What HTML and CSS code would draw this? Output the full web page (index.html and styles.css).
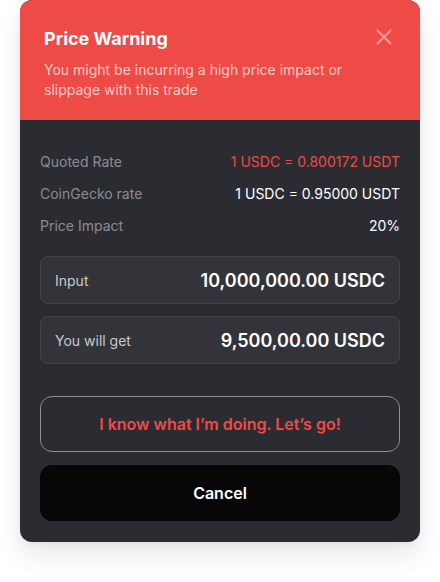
FILE: index.html
```html
<!DOCTYPE html>
<html>
<head>
<meta charset="utf-8">
<link rel="stylesheet" href="styles.css">
</head>
<body>
<div class="modal">
  <div class="header">
    <div class="title-row">
      <h1 class="title">Price Warning</h1>
      <button class="close" aria-label="Close">
        <svg width="16" height="16" viewBox="0 0 16 16"><path d="M1.5 1.5L14.5 14.5M14.5 1.5L1.5 14.5" stroke="currentColor" stroke-width="1.8" stroke-linecap="round"/></svg>
      </button>
    </div>
    <p class="subtitle">You might be incurring a high price impact or slippage with this trade</p>
  </div>
  <div class="body">
    <div class="rates">
      <div class="rate"><span class="label">Quoted Rate</span><span class="value red">1 USDC = 0.800172 USDT</span></div>
      <div class="rate"><span class="label">CoinGecko rate</span><span class="value">1 USDC = 0.95000 USDT</span></div>
      <div class="rate"><span class="label">Price Impact</span><span class="value">20%</span></div>
    </div>
    <div class="boxes">
      <div class="box"><span class="box-label">Input</span><span class="box-value">10,000,000.00 USDC</span></div>
      <div class="box"><span class="box-label">You will get</span><span class="box-value">9,500,00.00 USDC</span></div>
    </div>
    <div class="actions">
      <button class="btn btn-outline">I know what I’m doing. Let’s go!</button>
      <button class="btn btn-dark">Cancel</button>
    </div>
  </div>
</div>
</body>
</html>
```
FILE: styles.css
```css
* { box-sizing: border-box; }
html, body { background: #ffffff; }
body {
  margin: 0;
  min-height: 582px;
  font-family: Inter, "Noto Sans", sans-serif;
  padding: 0 20px 40px 20px;
}
.modal {
  width: 400px;
  border-radius: 12px;
  overflow: hidden;
  background: #2b2c31;
  box-shadow: 0 14px 28px rgba(0,0,0,0.09), 0 2px 8px rgba(0,0,0,0.05);
}
.header {
  background: #ef4b46;
  height: 120px;
  padding: 28px 24px 0 24px;
}
.title-row {
  display: flex;
  justify-content: space-between;
  align-items: flex-start;
}
.title {
  margin: 0;
  font-size: 18px;
  line-height: 22px;
  font-weight: 700;
  color: #ffffff;
}
.close {
  background: none;
  border: none;
  padding: 0;
  margin-top: 1px;
  margin-right: 4px;
  width: 16px;
  height: 16px;
  color: rgba(255,255,255,0.45);
  display: flex;
}
.subtitle {
  margin: 10px 0 0 0;
  font-size: 14px;
  line-height: 20px;
  color: rgba(255,255,255,0.72);
}
.body {
  padding: 32px 20px 21px 20px;
}
.rates {
  display: flex;
  flex-direction: column;
  gap: 12px;
}
.rate {
  display: flex;
  justify-content: space-between;
  font-size: 14px;
  line-height: 20px;
}
.label { color: #8b8c91; }
.value { color: #ffffff; }
.value.red { color: #f04a46; }
.boxes {
  margin-top: 20px;
  display: flex;
  flex-direction: column;
  gap: 12px;
}
.box {
  height: 48px;
  border: 1px solid #44454a;
  background: #333439;
  border-radius: 8px;
  padding: 0 14px;
  display: flex;
  align-items: center;
  justify-content: space-between;
}
.box-label {
  font-size: 14px;
  color: #c9cacd;
}
.box-value {
  font-size: 18px;
  font-weight: 600;
  color: #ffffff;
}
.actions {
  margin-top: 32px;
  display: flex;
  flex-direction: column;
  gap: 13px;
}
.btn {
  height: 56px;
  border-radius: 12px;
  font-family: Inter, "Noto Sans", sans-serif;
  font-size: 16px;
  font-weight: 600;
  cursor: pointer;
}
.btn-outline {
  background: transparent;
  border: 1px solid #8e8f94;
  color: #f04a46;
}
.btn-dark {
  background: #070708;
  border: none;
  color: #ffffff;
}
```
